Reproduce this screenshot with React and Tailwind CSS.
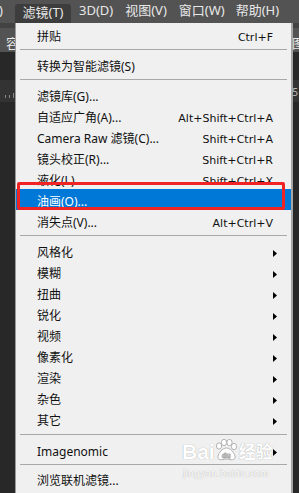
import React from "react";

function Arrow() {
  return (
    <svg width="4" height="7" viewBox="0 0 4 7" className="block">
      <path d="M0 0 L4 3.5 L0 7 Z" fill="#000" />
    </svg>
  );
}

function Item({ label, shortcut, sub, active }) {
  return (
    <div
      className={
        "flex h-[21px] items-center pl-[21px] pr-[18px] pt-[5px] text-[12px] leading-none " +
        (active ? "bg-[#0078d7] text-white" : "text-[#111]")
      }
    >
      <span className="flex-1 whitespace-nowrap">{label}</span>
      {shortcut && (
        <span className="whitespace-nowrap font-['DejaVu_Sans',sans-serif] text-[11px]">
          {shortcut}
        </span>
      )}
      {sub && (
        <span className="-mr-[10px] flex w-[10px] justify-start">
          <Arrow />
        </span>
      )}
    </div>
  );
}

function Sep({ h = "h-[9px]" }) {
  return (
    <div className={"flex items-center px-[4px] " + h}>
      <div className="h-px w-full bg-[#a8a8a8]" />
    </div>
  );
}

function Paw() {
  return (
    <svg width="24" height="22" viewBox="0 0 24 22" className="block">
      <g fill="#fff" stroke="#a0a0a0" strokeWidth="0.8">
        <ellipse cx="5" cy="7" rx="2.6" ry="3.2" />
        <ellipse cx="10" cy="3.5" rx="2.6" ry="3.2" />
        <ellipse cx="15.5" cy="3.5" rx="2.6" ry="3.2" />
        <ellipse cx="20" cy="7.5" rx="2.6" ry="3.2" />
        <path d="M12.5 9 C8 9 5 14 4 17 C3 20 6 21.5 9 20.5 C11 20 14 20 16 20.5 C19 21.5 22 20 21 17 C20 14 17 9 12.5 9 Z" />
      </g>
      <text x="8" y="19" fontSize="7" fontWeight="bold" fill="#fff" stroke="#a0a0a0" strokeWidth="0.4" fontFamily="Liberation Sans, sans-serif">du</text>
    </svg>
  );
}

export default function App() {
  return (
    <div className="relative h-[493px] w-[299px] overflow-hidden bg-[#282828] font-['Noto_Sans','Noto_Sans_CJK_SC',sans-serif]">
      {/* menubar */}
      <div className="flex h-[23px] items-end bg-[#535353] text-[13px] text-[#e8e8e8]">
        <span className="flex w-[3px] justify-end pb-[3px]">
          <span className="whitespace-nowrap">S)</span>
        </span>
        <span className="ml-[12px] flex h-[19px] w-[56px] items-center justify-center rounded-t-[3px] bg-[#3d3d3d] pb-[1px]">
          滤镜(T)
        </span>
        <span className="ml-[8px] pb-[3px]">3D(D)</span>
        <span className="ml-[12px] pb-[3px]">视图(V)</span>
        <span className="ml-[12px] pb-[3px]">窗口(W)</span>
        <span className="ml-[11px] pb-[3px]">帮助(H)</span>
      </div>
      {/* background panels */}
      <div className="h-[5px] bg-[#424242]" />
      <div className="flex h-[24px] items-end justify-between bg-[#535353] pb-[2px] text-[13px] leading-none text-[#e8e8e8]">
        <span className="pl-[6px]">容</span>
        <span className="-mr-[6px]">图</span>
      </div>
      <div className="h-[28px]" />
      <div className="flex h-[22px] items-end justify-between bg-[#333333] text-[10px] text-[#bbb]">
        <div className="flex items-end gap-[3px] pb-[4px] pl-[5px]">
          <div className="h-[3px] w-px bg-[#888]" />
          <div className="h-[3px] w-px bg-[#888]" />
          <div className="h-[5px] w-px bg-[#888]" />
        </div>
        <span className="pb-[5px] pr-[1px] leading-none">5</span>
      </div>

      {/* dropdown menu */}
      <div className="absolute bottom-0 left-[15px] top-[23px] w-[278px] border-l border-r-2 border-l-[#9a9a9a] border-r-[#a5a5a5] bg-[#f0f0f0] pt-[1px]">
        <Item label="拼贴" shortcut="Ctrl+F" />
        <Sep />
        <Item label="转换为智能滤镜(S)" />
        <Sep />
        <Item label="滤镜库(G)..." />
        <Item label="自适应广角(A)..." shortcut="Alt+Shift+Ctrl+A" />
        <Item label="Camera Raw 滤镜(C)..." shortcut="Shift+Ctrl+A" />
        <Item label="镜头校正(R)..." shortcut="Shift+Ctrl+R" />
        <Item label="液化(L)..." shortcut="Shift+Ctrl+X" />
        <Item label="油画(O)..." active />
        <Item label="消失点(V)..." shortcut="Alt+Ctrl+V" />
        <Sep />
        <Item label="风格化" sub />
        <Item label="模糊" sub />
        <Item label="扭曲" sub />
        <Item label="锐化" sub />
        <Item label="视频" sub />
        <Item label="像素化" sub />
        <Item label="渲染" sub />
        <Item label="杂色" sub />
        <Item label="其它" sub />
        <Sep h="h-[10px]" />
        <Item label="Imagenomic" sub />
        <Sep h="h-[8px]" />
        <Item label="浏览联机滤镜..." />
      </div>

      {/* red annotation box */}
      <div className="absolute left-[17px] top-[182px] h-[28px] w-[268px] rounded-[2px] border-[3px] border-[#f02424]" />

      {/* watermark */}
      <div className="pointer-events-none absolute left-[182px] top-[439px] flex flex-col items-start gap-[7px] font-['Liberation_Sans','Noto_Sans_CJK_SC',sans-serif] text-white [text-shadow:0_0_1px_#9a9a9a]">
        <div className="flex items-end text-[21px] font-bold leading-[21px]">
          <span>Bai</span>
          <span className="-ml-[1px] mb-[1px]">
            <Paw />
          </span>
          <span className="ml-[1px] text-[17px] leading-[19px]">经验</span>
        </div>
        <div className="pl-[1px] text-[10px] leading-[10px] tracking-[0.3px]">jingyan.baidu.com</div>
      </div>
    </div>
  );
}
